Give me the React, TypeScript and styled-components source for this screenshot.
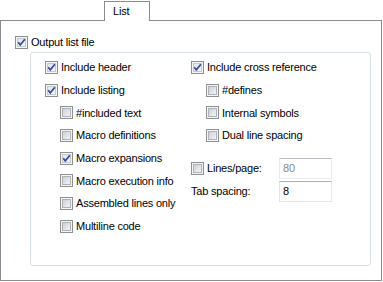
import React, { FC } from 'react';
import styled, { createGlobalStyle } from 'styled-components';

const GlobalStyle = createGlobalStyle`
  html, body {
    margin: 0;
    padding: 0;
    background: #fff;
  }
  body {
    font-family: "Liberation Sans", Arial, sans-serif;
    font-size: 11px;
    letter-spacing: -0.2px;
    color: #000;
  }
`;

const Window = styled.div`
  width: 383px;
  height: 282px;
  background: #fff;
`;

const TabStrip = styled.div`
  display: flex;
  align-items: flex-end;
  height: 20px;
  box-sizing: border-box;
  padding: 1px 0 0 104px;
`;

const Tab = styled.div`
  position: relative;
  z-index: 1;
  width: 46px;
  height: 20px;
  box-sizing: border-box;
  margin-bottom: -1px;
  padding-left: 8px;
  border: 1px solid #898c95;
  border-bottom: none;
  background: #fff;
  line-height: 18px;
  user-select: none;
`;

const Panel = styled.div`
  width: 382px;
  height: 261px;
  box-sizing: border-box;
  border: 1px solid #898c95;
  padding: 11px 0 0 14px;
`;

const TopRow = styled.div`
  display: flex;
  align-items: center;
  gap: 3px;
  height: 20px;
`;

const GroupBox = styled.div`
  display: grid;
  grid-template-columns: 146px 1fr;
  align-items: start;
  width: 341px;
  height: 214px;
  box-sizing: border-box;
  margin-left: 15px;
  padding: 3px 0 0 14px;
  border: 1px solid #d5dfe5;
  border-radius: 3px;
`;

const Column = styled.div`
  display: flex;
  flex-direction: column;
`;

const CheckRow = styled.div<{ $indent?: boolean }>`
  display: flex;
  align-items: center;
  gap: 3px;
  height: 22.7px;
  padding-left: ${(p) => (p.$indent ? 15 : 0)}px;
  white-space: nowrap;
`;

const FieldRow = styled.div<{ $first?: boolean }>`
  display: grid;
  grid-template-columns: 88px 53px;
  align-items: center;
  height: 23px;
  margin-top: ${(p) => (p.$first ? 10 : 0)}px;
  white-space: nowrap;
`;

const FieldLabel = styled.div`
  display: flex;
  align-items: center;
  gap: 3px;
`;

const TextBox = styled.input<{ $disabled?: boolean }>`
  width: 53px;
  height: 21px;
  box-sizing: border-box;
  margin: 0;
  padding: 0 0 0 3px;
  border: 1px solid;
  border-color: ${(p) =>
    p.$disabled ? '#b9bcc2 #e6e9ee #e6e9ee #e6e8ed' : '#abadb3 #e3e9ef #e3e9ef #e2e3ea'};
  border-radius: 0;
  outline: none;
  background: #fff;
  font-family: "Liberation Sans", Arial, sans-serif;
  font-size: 11px;
  color: ${(p) => (p.$disabled ? '#8a8a8a' : '#000')};
`;

const BoxSvg = styled.svg`
  flex: none;
  display: block;
`;

const CheckBox: FC<{ checked?: boolean }> = ({ checked }) => (
  <BoxSvg width={13} height={13} viewBox="0 0 13 13">
    <defs>
      <linearGradient id="cbOff" x1="0" y1="0" x2="1" y2="1">
        <stop offset="0" stopColor="#c9cdd3" />
        <stop offset="1" stopColor="#f7f7f7" />
      </linearGradient>
      <linearGradient id="cbOn" x1="0" y1="0" x2="1" y2="1">
        <stop offset="0" stopColor="#dfe3ea" />
        <stop offset="1" stopColor="#f8f9fa" />
      </linearGradient>
    </defs>
    <rect x={0.5} y={0.5} width={12} height={12} fill="#f5f5f5" stroke="#8e8f8f" />
    <rect x={2.5} y={2.5} width={8} height={8} fill={checked ? 'url(#cbOn)' : 'url(#cbOff)'} stroke={checked ? '#c4c9d1' : '#adb2b8'} />
    {checked && (
      <path d="M3.2 6.3 L5.3 8.9 L9.9 3.2" fill="none" stroke="#3a4e9b" strokeWidth={1.8} strokeLinejoin="miter" />
    )}
  </BoxSvg>
);

type Item = { label: string; checked?: boolean; indent?: boolean };

const leftItems: Item[] = [
  { label: 'Include header', checked: true },
  { label: 'Include listing', checked: true },
  { label: '#included text', indent: true },
  { label: 'Macro definitions', indent: true },
  { label: 'Macro expansions', checked: true, indent: true },
  { label: 'Macro execution info', indent: true },
  { label: 'Assembled lines only', indent: true },
  { label: 'Multiline code', indent: true },
];

const rightItems: Item[] = [
  { label: 'Include cross reference', checked: true },
  { label: '#defines', indent: true },
  { label: 'Internal symbols', indent: true },
  { label: 'Dual line spacing', indent: true },
];

const App: FC = () => (
  <>
    <GlobalStyle />
    <Window>
      <TabStrip>
        <Tab>List</Tab>
      </TabStrip>
      <Panel>
        <TopRow>
          <CheckBox checked />
          <span>Output list file</span>
        </TopRow>
        <GroupBox>
          <Column>
            {leftItems.map((it) => (
              <CheckRow key={it.label} $indent={it.indent}>
                <CheckBox checked={it.checked} />
                <span>{it.label}</span>
              </CheckRow>
            ))}
          </Column>
          <Column>
            {rightItems.map((it) => (
              <CheckRow key={it.label} $indent={it.indent}>
                <CheckBox checked={it.checked} />
                <span>{it.label}</span>
              </CheckRow>
            ))}
            <FieldRow $first>
              <FieldLabel>
                <CheckBox />
                <span>Lines/page:</span>
              </FieldLabel>
              <TextBox $disabled defaultValue="80" readOnly />
            </FieldRow>
            <FieldRow>
              <FieldLabel>
                <span>Tab spacing:</span>
              </FieldLabel>
              <TextBox defaultValue="8" readOnly />
            </FieldRow>
          </Column>
        </GroupBox>
      </Panel>
    </Window>
  </>
);

export default App;
